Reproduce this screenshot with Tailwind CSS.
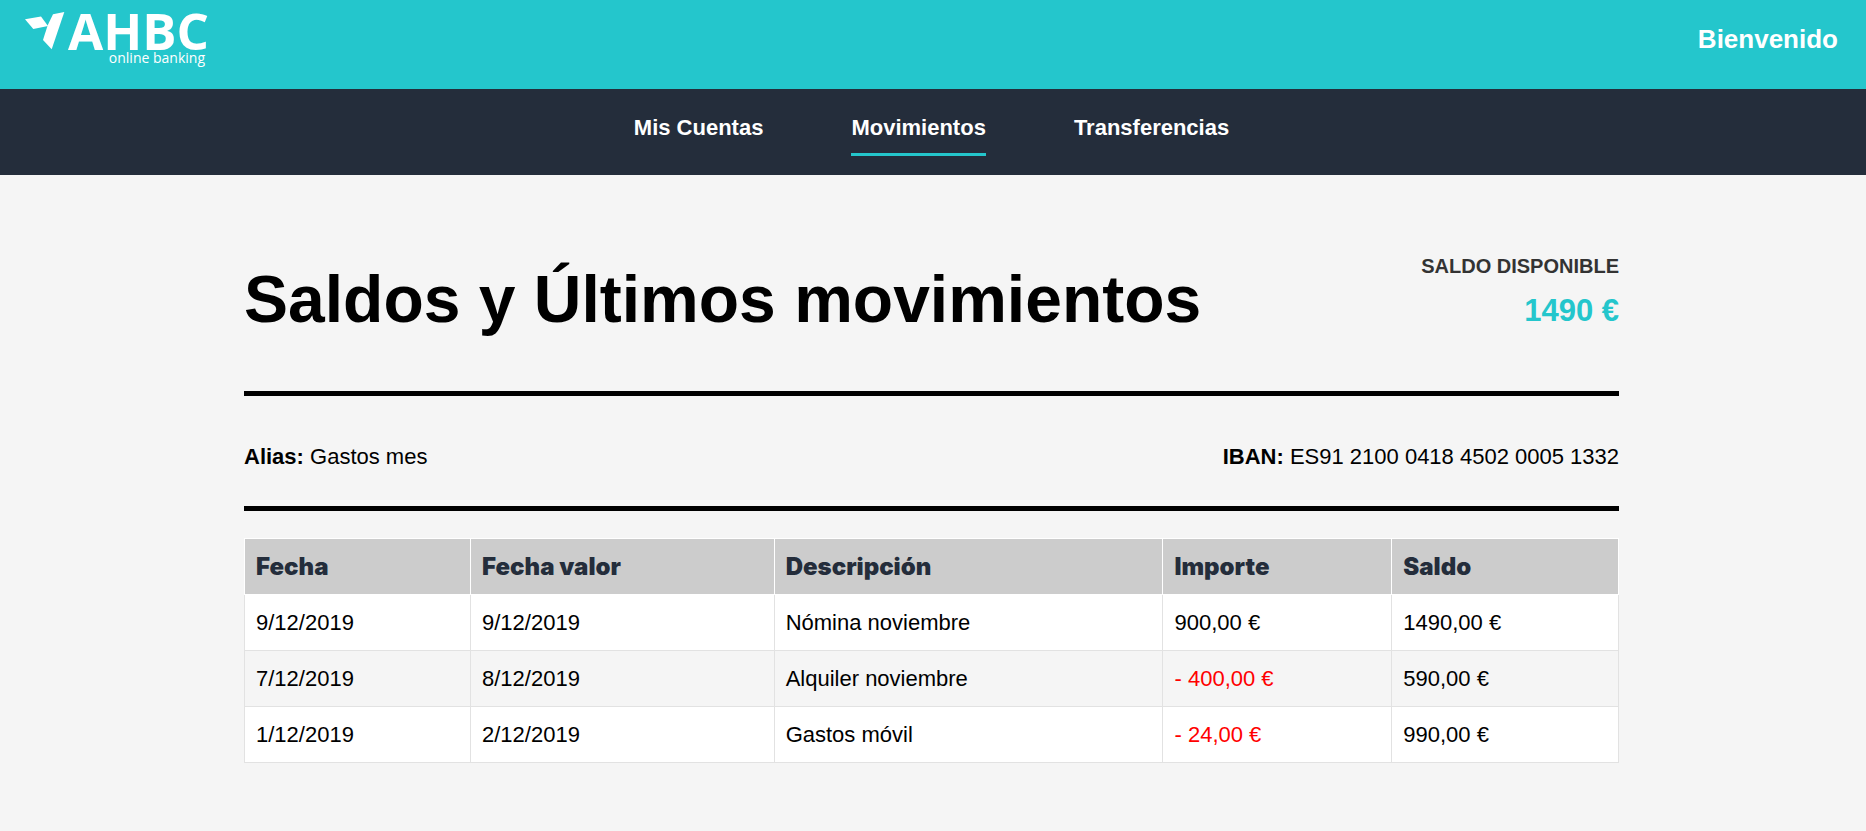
<!DOCTYPE html>
<html lang="es">
<head>
<meta charset="utf-8">
<title>AHBC online banking</title>
<script src="https://cdn.jsdelivr.net/npm/@tailwindcss/browser@4"></script>
</head>
<body class="min-h-screen bg-[#f5f5f5] font-['Liberation_Sans',Arial,sans-serif] text-[22px] leading-[33px] text-black">
<header class="flex h-[89px] items-start justify-between bg-[#24c6cc] pr-7 pl-[25px] text-white">
  <a href="#" class="flex items-start pt-3 font-['Open_Sans',sans-serif]">
    <svg class="h-[38px] w-10" viewBox="0 0 40 38" fill="currentColor" aria-hidden="true">
      <path d="M0 7.3L16 4.5L23 14L8.3 17Z"/>
      <path d="M28 2.3L39.3 0L26.7 37.3L18 28L22.6 13.5Z"/>
    </svg>
    <span class="flex flex-col items-end pl-[3px]">
      <span class="text-[51px] leading-[36px] font-bold">AHBC</span>
      <span class="pr-1 text-sm leading-[20px]">online banking</span>
    </span>
  </a>
  <p class="pt-[24px] text-[26px] leading-[30px] font-bold">Bienvenido</p>
</header>
<nav class="flex h-[86px] justify-center gap-[88px] bg-[#242d3b] pt-[22px] pr-[3px] font-bold text-white">
  <a href="#" class="h-[45px]">Mis Cuentas</a>
  <a href="#" class="h-[45px] border-b-3 border-[#24c6cc]" aria-current="page">Movimientos</a>
  <a href="#" class="h-[45px]">Transferencias</a>
</nav>
<main class="pt-[66px] pr-[3px]">
  <div class="mx-auto max-w-[1375px]">
    <section class="flex items-start justify-between border-b-5 border-black pb-[54px]">
      <h1 class="pt-[21px] text-[66px] leading-[75px] font-bold">Saldos y Últimos movimientos</h1>
      <div class="pt-[10px] text-right font-bold">
        <h2 class="text-xl leading-[30px] text-[#333]">SALDO DISPONIBLE</h2>
        <p class="pt-2 text-[31px] leading-[44px] text-[#24c6cc]">1490 €</p>
      </div>
    </section>
    <section class="flex justify-between border-b-5 border-black pt-[44px] pb-[33px]">
      <p><strong>Alias:</strong> Gastos mes</p>
      <p><strong>IBAN:</strong> ES91 2100 0418 4502 0005 1332</p>
    </section>
    <table class="mt-[27px] w-full table-fixed border-collapse bg-white text-left">
      <colgroup><col class="w-[16.45%]"><col class="w-[22.1%]"><col class="w-[28.3%]"><col class="w-[16.65%]"><col class="w-[16.5%]"></colgroup>
      <thead class="bg-[#ccc] font-['Arial_Black','Inter',sans-serif] text-2xl leading-[33px] text-[#242d3b]">
        <tr class="h-14">
          <th class="border border-white px-[11px] font-black">Fecha</th>
          <th class="border border-white px-[11px] font-black">Fecha valor</th>
          <th class="border border-white px-[11px] font-black">Descripción</th>
          <th class="border border-white px-[11px] font-black">Importe</th>
          <th class="border border-white px-[11px] font-black">Saldo</th>
        </tr>
      </thead>
      <tbody>
        <tr class="h-14">
          <td class="border border-[#e2e2e2] px-[11px]">9/12/2019</td>
          <td class="border border-[#e2e2e2] px-[11px]">9/12/2019</td>
          <td class="border border-[#e2e2e2] px-[11px]">Nómina noviembre</td>
          <td class="border border-[#e2e2e2] px-[11px]">900,00 €</td>
          <td class="border border-[#e2e2e2] px-[11px]">1490,00 €</td>
        </tr>
        <tr class="h-14 bg-[#f5f5f5]">
          <td class="border border-[#e2e2e2] px-[11px]">7/12/2019</td>
          <td class="border border-[#e2e2e2] px-[11px]">8/12/2019</td>
          <td class="border border-[#e2e2e2] px-[11px]">Alquiler noviembre</td>
          <td class="border border-[#e2e2e2] px-[11px] text-[#f00]">- 400,00 €</td>
          <td class="border border-[#e2e2e2] px-[11px]">590,00 €</td>
        </tr>
        <tr class="h-14">
          <td class="border border-[#e2e2e2] px-[11px]">1/12/2019</td>
          <td class="border border-[#e2e2e2] px-[11px]">2/12/2019</td>
          <td class="border border-[#e2e2e2] px-[11px]">Gastos móvil</td>
          <td class="border border-[#e2e2e2] px-[11px] text-[#f00]">- 24,00 €</td>
          <td class="border border-[#e2e2e2] px-[11px]">990,00 €</td>
        </tr>
      </tbody>
    </table>
  </div>
</main>
</body>
</html>
